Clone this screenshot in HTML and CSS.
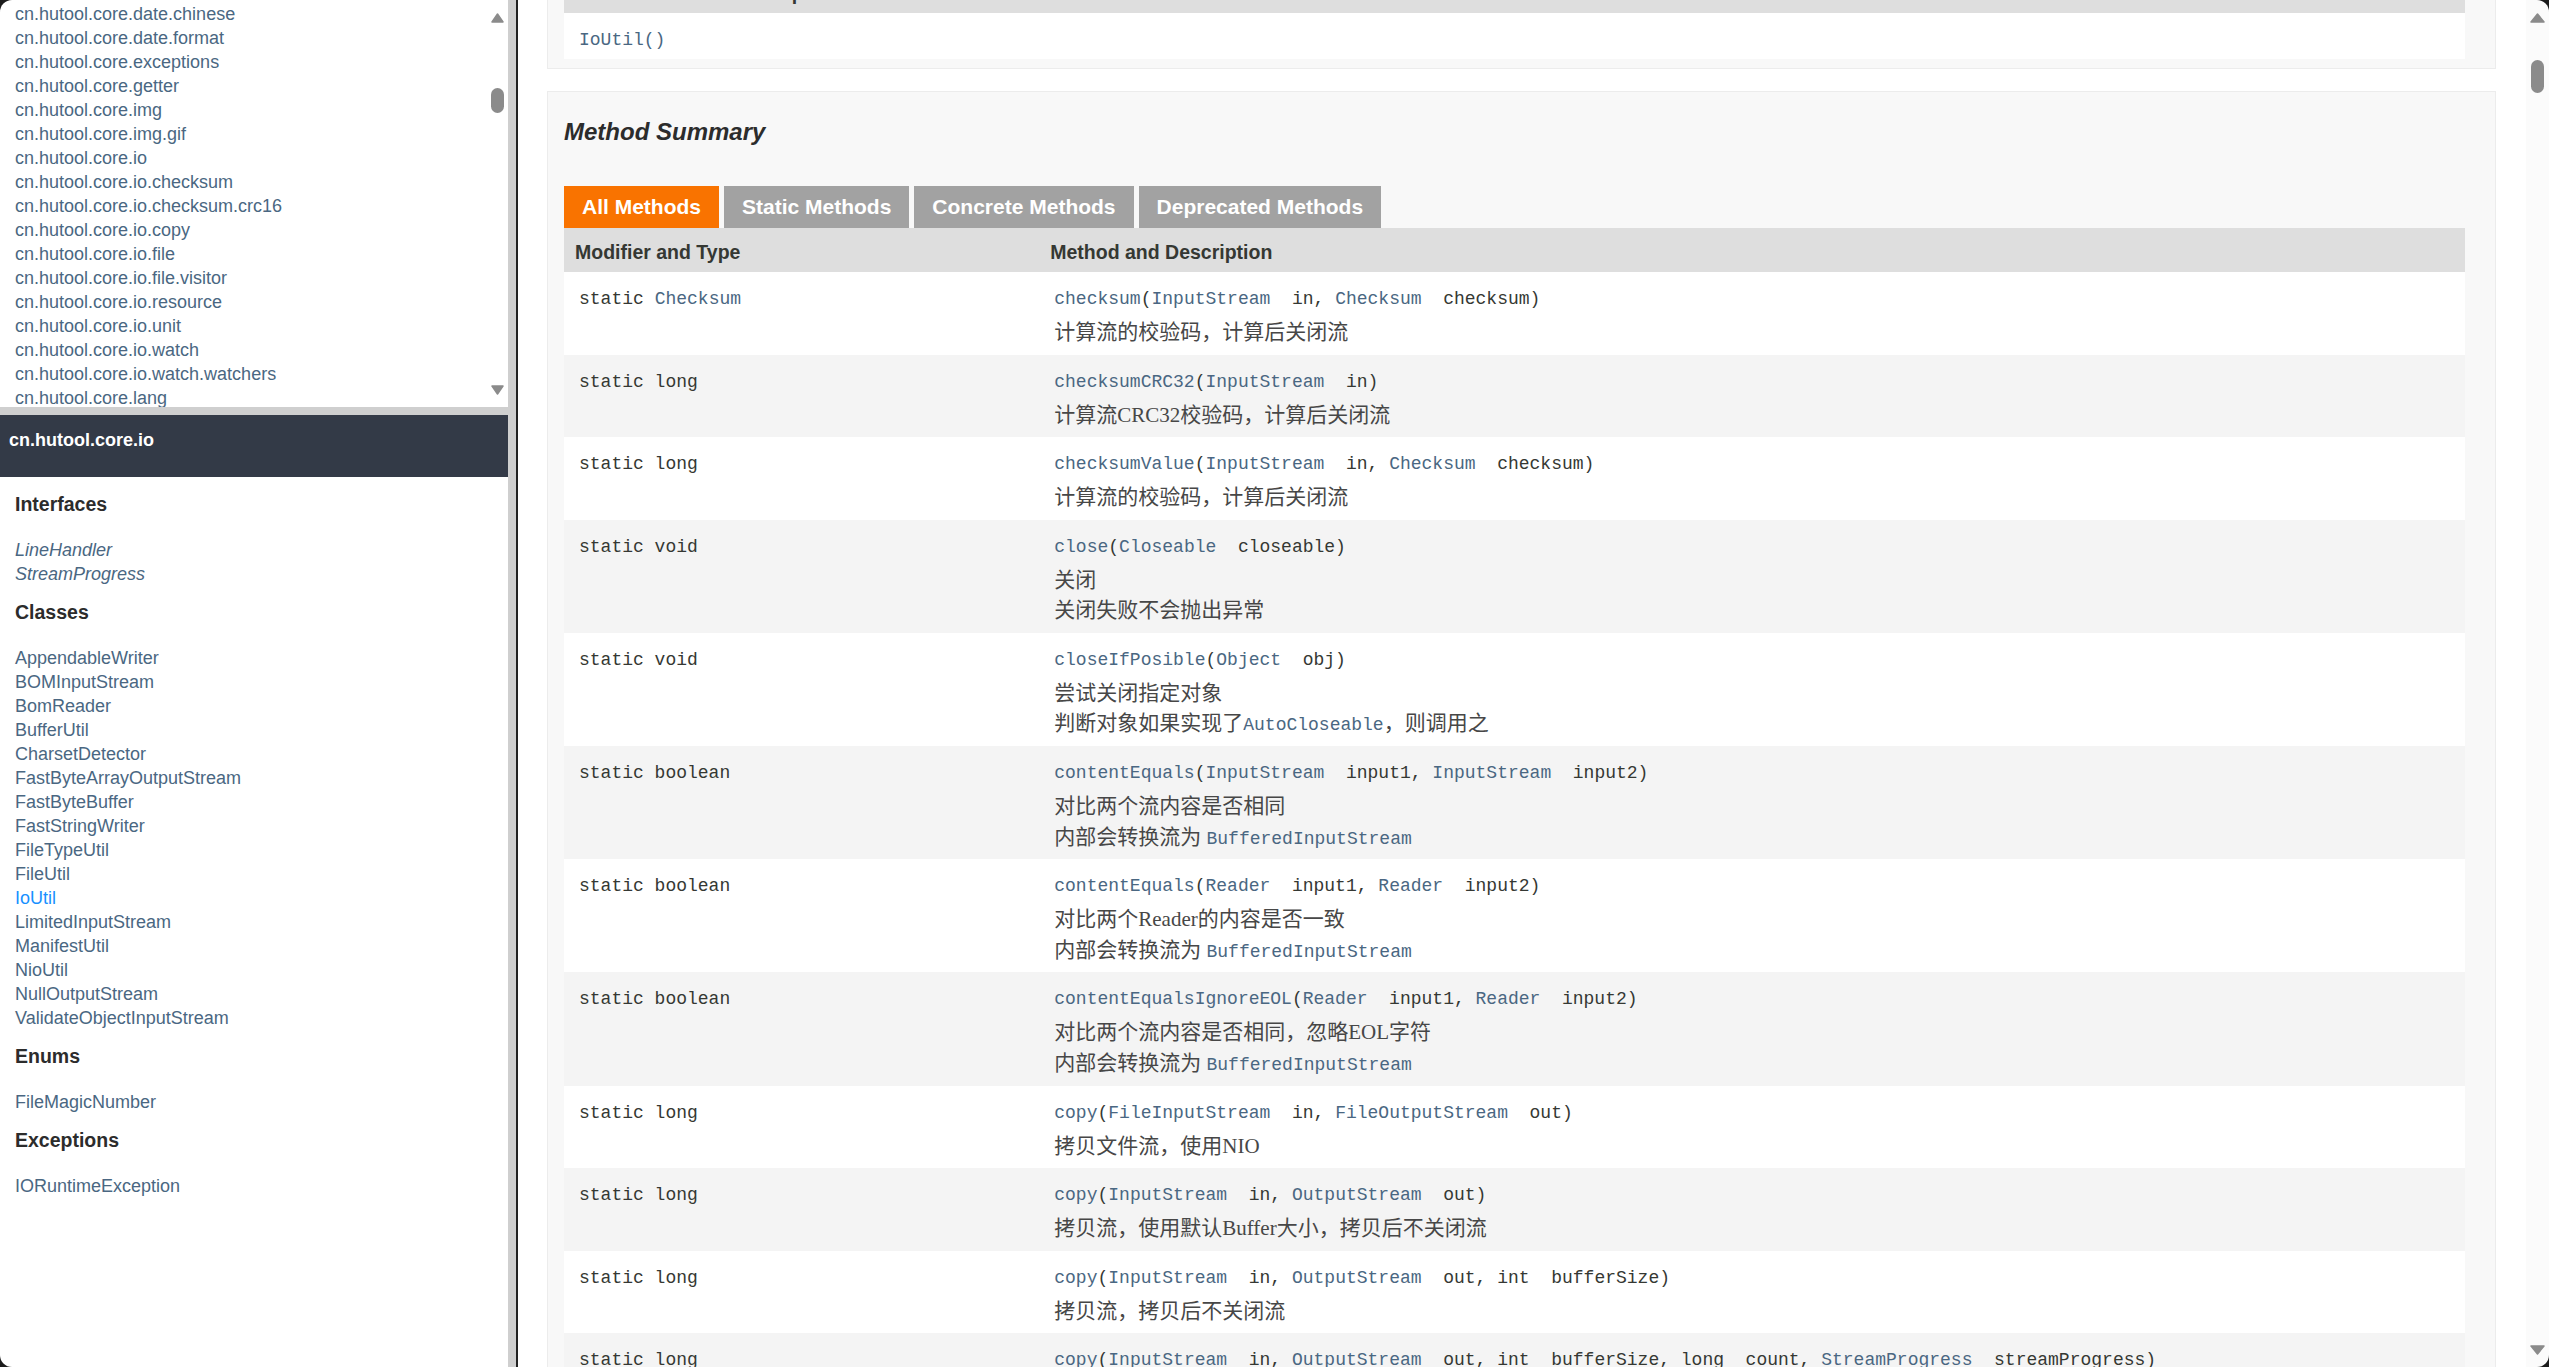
FILE: index.html
```html
<!DOCTYPE html>
<html lang="zh-CN">
<head>
<meta charset="utf-8">
<title>IoUtil</title>
<link rel="stylesheet" href="styles.css">
</head>
<body>
<div class="page">
  <div class="left">
    <div class="pkg-frame">
      <ul class="pkg-list">
        <li><a>cn.hutool.core.date.chinese</a></li>
        <li><a>cn.hutool.core.date.format</a></li>
        <li><a>cn.hutool.core.exceptions</a></li>
        <li><a>cn.hutool.core.getter</a></li>
        <li><a>cn.hutool.core.img</a></li>
        <li><a>cn.hutool.core.img.gif</a></li>
        <li><a>cn.hutool.core.io</a></li>
        <li><a>cn.hutool.core.io.checksum</a></li>
        <li><a>cn.hutool.core.io.checksum.crc16</a></li>
        <li><a>cn.hutool.core.io.copy</a></li>
        <li><a>cn.hutool.core.io.file</a></li>
        <li><a>cn.hutool.core.io.file.visitor</a></li>
        <li><a>cn.hutool.core.io.resource</a></li>
        <li><a>cn.hutool.core.io.unit</a></li>
        <li><a>cn.hutool.core.io.watch</a></li>
        <li><a>cn.hutool.core.io.watch.watchers</a></li>
        <li><a>cn.hutool.core.lang</a></li>
        <li><a>cn.hutool.core.lang.ansi</a></li>
      </ul>
      <div class="vscroll pkg-scroll">
        <svg class="arrow up" width="13" height="10" viewBox="0 0 13 10"><path d="M6.5 1 L12 9 L1 9 Z" fill="#8b8b8b" stroke="#8b8b8b" stroke-width="1.5" stroke-linejoin="round"/></svg>
        <div class="thumb"></div>
        <svg class="arrow down" width="13" height="10" viewBox="0 0 13 10"><path d="M1 1 L12 1 L6.5 9 Z" fill="#8b8b8b" stroke="#8b8b8b" stroke-width="1.5" stroke-linejoin="round"/></svg>
      </div>
    </div>
    <div class="hsep"></div>
    <div class="cls-frame">
      <div class="bar">cn.hutool.core.io</div>
      <div class="cls-body">
        <h2>Interfaces</h2>
        <ul class="cls-list italic">
          <li><a>LineHandler</a></li>
          <li><a>StreamProgress</a></li>
        </ul>
        <h2>Classes</h2>
        <ul class="cls-list">
          <li><a>AppendableWriter</a></li>
          <li><a>BOMInputStream</a></li>
          <li><a>BomReader</a></li>
          <li><a>BufferUtil</a></li>
          <li><a>CharsetDetector</a></li>
          <li><a>FastByteArrayOutputStream</a></li>
          <li><a>FastByteBuffer</a></li>
          <li><a>FastStringWriter</a></li>
          <li><a>FileTypeUtil</a></li>
          <li><a>FileUtil</a></li>
          <li><a class="current">IoUtil</a></li>
          <li><a>LimitedInputStream</a></li>
          <li><a>ManifestUtil</a></li>
          <li><a>NioUtil</a></li>
          <li><a>NullOutputStream</a></li>
          <li><a>ValidateObjectInputStream</a></li>
        </ul>
        <h2>Enums</h2>
        <ul class="cls-list">
          <li><a>FileMagicNumber</a></li>
        </ul>
        <h2>Exceptions</h2>
        <ul class="cls-list">
          <li><a>IORuntimeException</a></li>
        </ul>
      </div>
    </div>
  </div>
  <div class="vsep"></div>
  <div class="right">
    <div class="content">
      <div class="scroller">
        <div class="panel">
          <h3>Constructor Summary</h3>
          <div class="tabs"><span class="tab active">Constructors</span></div>
          <table class="summary">
            <thead><tr><th>Constructor and Description</th></tr></thead>
            <tbody>
              <tr><td class="ctor"><code class="sig link"><a>IoUtil</a>()</code></td></tr>
            </tbody>
          </table>
        </div>
        <div class="panel">
          <h3>Method Summary</h3>
          <div class="tabs">
            <span class="tab active">All Methods</span>
            <span class="tab">Static Methods</span>
            <span class="tab">Concrete Methods</span>
            <span class="tab">Deprecated Methods</span>
          </div>
          <table class="summary">
            <colgroup><col class="col1"><col></colgroup>
            <thead><tr><th>Modifier and Type</th><th>Method and Description</th></tr></thead>
            <tbody>
              <tr>
                <td><code class="sig">static <a>Checksum</a></code></td>
                <td><code class="sig"><a>checksum</a>(<a>InputStream</a>&nbsp;&nbsp;in, <a>Checksum</a>&nbsp;&nbsp;checksum)</code>
                  <div class="desc">计算流的校验码，计算后关闭流</div></td>
              </tr>
              <tr>
                <td><code class="sig">static long</code></td>
                <td><code class="sig"><a>checksumCRC32</a>(<a>InputStream</a>&nbsp;&nbsp;in)</code>
                  <div class="desc">计算流CRC32校验码，计算后关闭流</div></td>
              </tr>
              <tr>
                <td><code class="sig">static long</code></td>
                <td><code class="sig"><a>checksumValue</a>(<a>InputStream</a>&nbsp;&nbsp;in, <a>Checksum</a>&nbsp;&nbsp;checksum)</code>
                  <div class="desc">计算流的校验码，计算后关闭流</div></td>
              </tr>
              <tr>
                <td><code class="sig">static void</code></td>
                <td><code class="sig"><a>close</a>(<a>Closeable</a>&nbsp;&nbsp;closeable)</code>
                  <div class="desc">关闭<br>关闭失败不会抛出异常</div></td>
              </tr>
              <tr>
                <td><code class="sig">static void</code></td>
                <td><code class="sig"><a>closeIfPosible</a>(<a>Object</a>&nbsp;&nbsp;obj)</code>
                  <div class="desc">尝试关闭指定对象<br>判断对象如果实现了<code class="inl">AutoCloseable</code>，则调用之</div></td>
              </tr>
              <tr>
                <td><code class="sig">static boolean</code></td>
                <td><code class="sig"><a>contentEquals</a>(<a>InputStream</a>&nbsp;&nbsp;input1, <a>InputStream</a>&nbsp;&nbsp;input2)</code>
                  <div class="desc">对比两个流内容是否相同<br>内部会转换流为 <code class="inl">BufferedInputStream</code></div></td>
              </tr>
              <tr>
                <td><code class="sig">static boolean</code></td>
                <td><code class="sig"><a>contentEquals</a>(<a>Reader</a>&nbsp;&nbsp;input1, <a>Reader</a>&nbsp;&nbsp;input2)</code>
                  <div class="desc">对比两个Reader的内容是否一致<br>内部会转换流为 <code class="inl">BufferedInputStream</code></div></td>
              </tr>
              <tr>
                <td><code class="sig">static boolean</code></td>
                <td><code class="sig"><a>contentEqualsIgnoreEOL</a>(<a>Reader</a>&nbsp;&nbsp;input1, <a>Reader</a>&nbsp;&nbsp;input2)</code>
                  <div class="desc">对比两个流内容是否相同，忽略EOL字符<br>内部会转换流为 <code class="inl">BufferedInputStream</code></div></td>
              </tr>
              <tr>
                <td><code class="sig">static long</code></td>
                <td><code class="sig"><a>copy</a>(<a>FileInputStream</a>&nbsp;&nbsp;in, <a>FileOutputStream</a>&nbsp;&nbsp;out)</code>
                  <div class="desc">拷贝文件流，使用NIO</div></td>
              </tr>
              <tr>
                <td><code class="sig">static long</code></td>
                <td><code class="sig"><a>copy</a>(<a>InputStream</a>&nbsp;&nbsp;in, <a>OutputStream</a>&nbsp;&nbsp;out)</code>
                  <div class="desc">拷贝流，使用默认Buffer大小，拷贝后不关闭流</div></td>
              </tr>
              <tr>
                <td><code class="sig">static long</code></td>
                <td><code class="sig"><a>copy</a>(<a>InputStream</a>&nbsp;&nbsp;in, <a>OutputStream</a>&nbsp;&nbsp;out, int&nbsp;&nbsp;bufferSize)</code>
                  <div class="desc">拷贝流，拷贝后不关闭流</div></td>
              </tr>
              <tr>
                <td><code class="sig">static long</code></td>
                <td><code class="sig"><a>copy</a>(<a>InputStream</a>&nbsp;&nbsp;in, <a>OutputStream</a>&nbsp;&nbsp;out, int&nbsp;&nbsp;bufferSize, long&nbsp;&nbsp;count, <a>StreamProgress</a>&nbsp;&nbsp;streamProgress)</code>
                  <div class="desc">拷贝流，拷贝后不关闭流</div></td>
              </tr>
            </tbody>
          </table>
        </div>
      </div>
    </div>
    <div class="vscroll main-scroll">
      <svg class="arrow up" width="15" height="10" viewBox="0 0 15 10"><path d="M7.5 1 L14 9 L1 9 Z" fill="#8b8b8b" stroke="#8b8b8b" stroke-width="1.5" stroke-linejoin="round"/></svg>
      <div class="thumb"></div>
      <svg class="arrow down" width="15" height="10" viewBox="0 0 15 10"><path d="M1 1 L14 1 L7.5 9 Z" fill="#8b8b8b" stroke="#8b8b8b" stroke-width="1.5" stroke-linejoin="round"/></svg>
    </div>
  </div>
</div>
<div class="corners"></div>
</body>
</html>
```

FILE: styles.css
```css
html, body {
  margin: 0;
  padding: 0;
}
body {
  width: 2549px;
  height: 1367px;
  overflow: hidden;
  background: #ffffff;
  font-family: "Liberation Sans", Arial, "Noto Sans CJK SC", sans-serif;
  color: #353833;
}
a {
  color: #4a6782;
  text-decoration: none;
}
.page {
  display: flex;
  height: 1367px;
}

/* ---------- left column ---------- */
.left {
  width: 508px;
  flex: none;
  display: flex;
  flex-direction: column;
}
.pkg-frame {
  height: 407px;
  flex: none;
  display: flex;
  overflow: hidden;
  background: #ffffff;
}
.pkg-list {
  flex: 1;
  list-style: none;
  margin: 0;
  padding: 2px 0 0 15px;
  font-size: 18px;
  line-height: 24px;
  overflow: hidden;
  white-space: nowrap;
}
.hsep {
  height: 8px;
  flex: none;
  background: #cfcfcf;
}
.cls-frame {
  flex: 1;
  overflow: hidden;
  background: #ffffff;
}
.bar {
  height: 62px;
  box-sizing: border-box;
  padding: 13px 9px 0;
  background: #333a47;
  color: #ffffff;
  font-weight: bold;
  font-size: 18px;
  line-height: 24px;
}
.cls-body {
  padding-left: 15px;
}
.cls-body h2 {
  margin: 14px 0 22px;
  font-size: 19.5px;
  line-height: 24px;
  font-weight: bold;
  color: #2c2c2c;
}
.cls-body h2:first-child {
  margin-top: 15px;
}
.cls-list {
  list-style: none;
  margin: 0;
  padding: 0;
  font-size: 18px;
  line-height: 24px;
  white-space: nowrap;
}
.cls-list.italic a {
  font-style: italic;
}
.cls-list a.current {
  color: #1890ff;
}
.vsep {
  width: 8px;
  flex: none;
  background: #cfcfcf;
  border-right: 2px solid #222222;
}

/* ---------- scrollbars ---------- */
.vscroll {
  flex: none;
  display: flex;
  flex-direction: column;
  align-items: center;
}
.vscroll .arrow {
  display: block;
  flex: none;
}
.vscroll .thumb {
  flex: none;
  background: #8b8b8b;
}
.pkg-scroll {
  width: 22px;
  background: #ffffff;
}
.pkg-scroll .up {
  margin-top: 13px;
}
.pkg-scroll .thumb {
  margin-top: 65px;
  width: 13px;
  height: 25px;
  border-radius: 6.5px;
}
.pkg-scroll .down {
  margin-top: auto;
  margin-bottom: 12px;
}
.main-scroll {
  width: 23px;
  background: #fbfbfb;
}
.main-scroll .up {
  margin-top: 13px;
}
.main-scroll .thumb {
  margin-top: 37px;
  width: 13px;
  height: 33px;
  border-radius: 6.5px;
}
.main-scroll .down {
  margin-top: auto;
  margin-bottom: 12px;
}

/* ---------- right frame ---------- */
.right {
  flex: 1;
  display: flex;
  overflow: hidden;
  background: #ffffff;
}
.content {
  flex: 1;
  overflow: hidden;
  padding: 0 30px 0 29px;
}
.scroller {
  margin-top: -168px;
}
.panel {
  background: #f8f8f8;
  border: 1px solid #ececec;
  padding: 0 30px 9px 16px;
}
.panel + .panel {
  margin-top: 22px;
}
.panel h3 {
  margin: 25px 0 39px;
  font-size: 24px;
  line-height: 30px;
  font-style: italic;
  font-weight: bold;
  color: #2c2c2c;
}
.tabs {
  display: flex;
  gap: 5px;
  height: 42px;
}
.tab {
  padding: 0 18px;
  line-height: 42px;
  font-size: 21px;
  font-weight: bold;
  color: #ffffff;
  background: #a2a2a2;
  white-space: nowrap;
}
.tab.active {
  background: #f97300;
}
table.summary {
  width: 100%;
  border-collapse: collapse;
  border-spacing: 0;
  table-layout: fixed;
}
.summary col.col1 {
  width: 25%;
}
.summary th {
  height: 40px;
  padding: 4px 11px 0;
  text-align: left;
  font-size: 19.5px;
  font-weight: bold;
  background: #dedede;
  color: #353833;
  white-space: nowrap;
}
.summary td {
  vertical-align: top;
  padding: 15px 15px 6.8px 15px;
  white-space: nowrap;
  overflow: hidden;
}
.summary td.ctor {
  padding-bottom: 7px;
  background: #ffffff;
}
.summary tbody tr:nth-child(odd) td {
  background: #ffffff;
}
.summary tbody tr:nth-child(even) td {
  background: #f4f4f4;
}
code {
  font-family: "Liberation Mono", "Courier New", "Noto Sans CJK SC", monospace;
  font-size: 18px;
}
.sig {
  display: block;
  line-height: 24px;
  color: #353833;
}
.sig.link {
  color: #4a6782;
}
.desc {
  margin-top: 6px;
  font-family: "Liberation Serif", "Times New Roman", "Noto Sans CJK SC", serif;
  font-size: 21px;
  line-height: 30.7px;
  color: #474747;
}
.desc code.inl {
  color: #4a6782;
  line-height: 18px;
}

/* ---------- window corners ---------- */
.corners {
  position: fixed;
  top: 0;
  left: 0;
  right: 0;
  bottom: 0;
  border-radius: 12px;
  box-shadow: 0 0 0 40px #1c1c1c;
  pointer-events: none;
}
```
